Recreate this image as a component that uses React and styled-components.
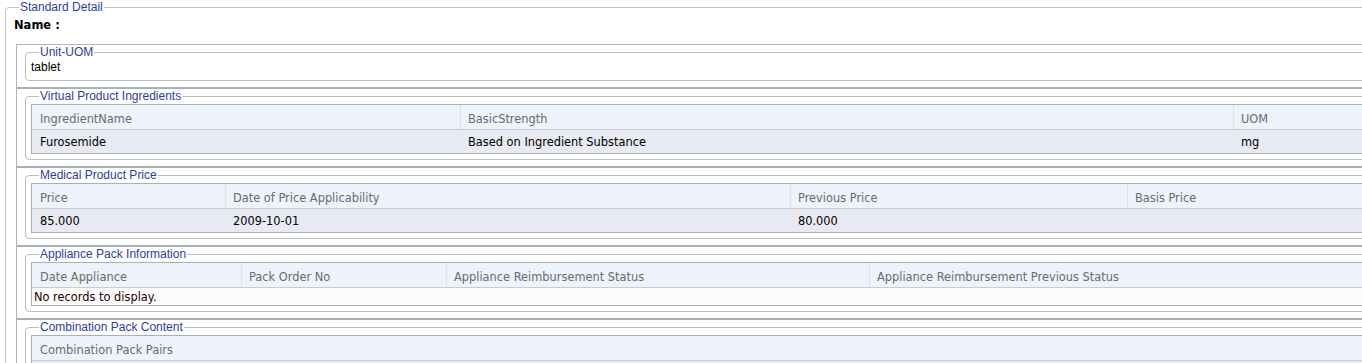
import React from "react";
import styled, { createGlobalStyle } from "styled-components";

const GlobalStyle = createGlobalStyle`
  html, body {
    margin: 0;
    padding: 0;
    background: #ffffff;
    overflow: hidden;
  }
  body {
    font-family: "Liberation Sans", Arial, sans-serif;
    font-size: 12px;
    color: #000000;
  }
`;

const Outer = styled.fieldset`
  margin: 0 0 0 5px;
  width: 1500px;
  border: 1px solid #c4c4c4;
  border-radius: 4px;
  padding: 0 0 0 8px;
`;

const Legend = styled.legend`
  font-family: "Liberation Sans", Arial, sans-serif;
  font-size: 12px;
  line-height: 14px;
  color: #2f3ca6;
  padding: 0 1px;
  margin-left: ${(p) => p.$offset || 8}px;
`;

const NameRow = styled.div`
  margin-top: 4px;
  font-family: "DejaVu Sans", Verdana, sans-serif;
  font-weight: 700;
  font-size: 11.5px;
  line-height: 15px;
`;

const Board = styled.div`
  margin: 11px 0 0 2px;
  border-top: 1px solid #b4b4b4;
  border-left: 1px solid #b4b4b4;
`;

const Section = styled.div`
  padding: 0 0 6px 8px;
  border-top: ${(p) => (p.$first ? "none" : "2px solid #a9afb9")};
`;

const Box = styled.fieldset`
  margin: 0;
  border: 1px solid #bdbdbd;
  border-radius: 4px;
  padding: 0 0 5px 5px;
`;

const Plain = styled.div`
  line-height: 15px;
  padding-top: 1px;
`;

const Grid = styled.div`
  margin-top: 1px;
  border: 1px solid #a9b0bc;
  border-right: none;
  font-family: "DejaVu Sans", Verdana, sans-serif;
  font-size: 11.4px;
`;

const Row = styled.div`
  display: flex;
  height: ${(p) => p.$h}px;
  align-items: center;
  background: ${(p) => p.$bg};
  border-top: ${(p) => (p.$top ? "1px solid #c6cbd4" : "none")};
`;

const HeadCell = styled.div`
  box-sizing: border-box;
  width: ${(p) => p.$w}px;
  flex: none;
  height: 100%;
  display: flex;
  align-items: center;
  padding: 3px 0 0 ${(p) => (p.$first ? 8 : 7)}px;
  color: #6b6b6b;
  border-left: ${(p) => (p.$first ? "none" : "1px solid #dde1e8")};
  white-space: nowrap;
`;

const Cell = styled.div`
  box-sizing: border-box;
  width: ${(p) => p.$w}px;
  flex: none;
  padding-left: 8px;
  color: #000000;
  white-space: nowrap;
`;

const Empty = styled.div`
  padding-left: 2px;
  color: #2a0000;
  white-space: nowrap;
`;

const sections = [
  {
    title: "Virtual Product Ingredients",
    cols: [428, 773, 200],
    head: ["IngredientName", "BasicStrength", "UOM"],
    rows: [["Furosemide", "Based on Ingredient Substance", "mg"]],
  },
  {
    title: "Medical Product Price",
    cols: [193, 565, 337, 300],
    head: ["Price", "Date of Price Applicability", "Previous Price", "Basis Price"],
    rows: [["85.000", "2009-10-01", "80.000", ""]],
  },
  {
    title: "Appliance Pack Information",
    cols: [209, 205, 423, 560],
    head: [
      "Date Appliance",
      "Pack Order No",
      "Appliance Reimbursement Status",
      "Appliance Reimbursement Previous Status",
    ],
    rows: [],
  },
  {
    title: "Combination Pack Content",
    cols: [1400],
    head: ["Combination Pack Pairs"],
    rows: [["", ""]],
  },
];

const DataGrid = ({ cols, head, rows }) => (
  <Grid>
    <Row $h={24} $bg="#eef2fa">
      {head.map((h, i) => (
        <HeadCell key={h} $w={cols[i]} $first={i === 0}>
          {h}
        </HeadCell>
      ))}
    </Row>
    {rows.length === 0 ? (
      <Row $h={17} $bg="#fcfcfc" $top>
        <Empty>No records to display.</Empty>
      </Row>
    ) : (
      rows.map((r, ri) => (
        <Row key={ri} $h={23} $bg="#e7eaf0" $top>
          {cols.map((w, i) => (
            <Cell key={i} $w={w}>
              {r[i]}
            </Cell>
          ))}
        </Row>
      ))
    )}
  </Grid>
);

const App = () => {
  return (
    <>
      <GlobalStyle />
      <Outer>
        <Legend $offset={5}>Standard Detail</Legend>
        <NameRow>Name :</NameRow>
        <Board>
          <Section $first>
            <Box>
              <Legend>Unit-UOM</Legend>
              <Plain>tablet</Plain>
            </Box>
          </Section>
          {sections.map((s) => (
            <Section key={s.title}>
              <Box>
                <Legend>{s.title}</Legend>
                <DataGrid cols={s.cols} head={s.head} rows={s.rows} />
              </Box>
            </Section>
          ))}
        </Board>
      </Outer>
    </>
  );
};

export default App;
